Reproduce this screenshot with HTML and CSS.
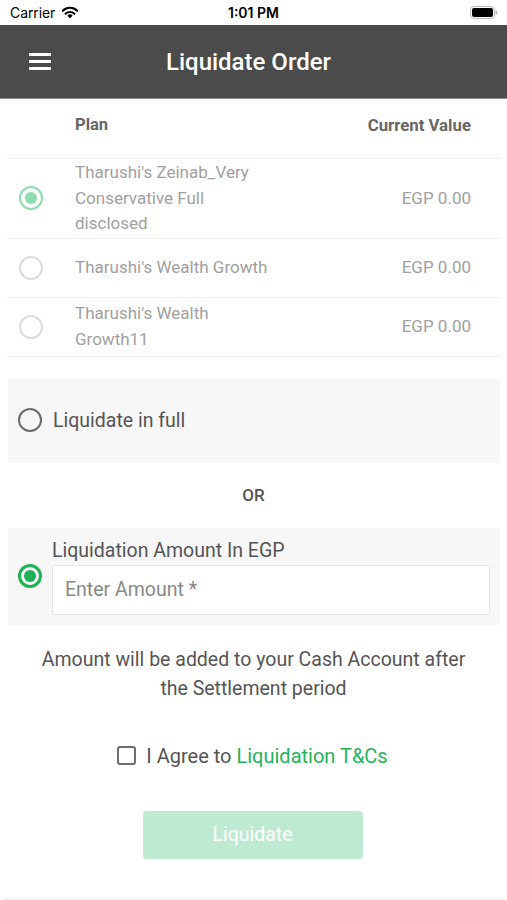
FILE: index.html
```html
<!DOCTYPE html>
<html>
<head>
<meta charset="utf-8">
<link rel="stylesheet" href="styles.css">
</head>
<body>
<div class="screen">
  <div class="status">
    <div class="status-left">
      <span class="carrier">Carrier</span>
      <svg class="wifi" width="18" height="13" viewBox="0 0 18 13">
        <path d="M9 12.5 L6.3 9.6 A4 4 0 0 1 11.7 9.6 Z" fill="#000"/>
        <path d="M4.6 7.8 A6.4 6.4 0 0 1 13.4 7.8" fill="none" stroke="#000" stroke-width="2.1" stroke-linecap="round"/>
        <path d="M1.8 4.8 A10.2 10.2 0 0 1 16.2 4.8" fill="none" stroke="#000" stroke-width="2.1" stroke-linecap="round"/>
      </svg>
    </div>
    <div class="time">1:01 PM</div>
    <div class="status-right">
      <svg width="28" height="13" viewBox="0 0 28 13">
        <rect x="0.5" y="0.5" width="24" height="12" rx="3.5" fill="none" stroke="#bbb" stroke-width="1"/>
        <rect x="2" y="2" width="21" height="9" rx="2" fill="#000"/>
        <rect x="25.5" y="4.5" width="1.8" height="4" rx="0.9" fill="#bbb"/>
      </svg>
    </div>
  </div>

  <div class="nav">
    <div class="burger"><span></span><span></span><span></span></div>
    <div class="title">Liquidate Order</div>
  </div>

  <div class="table">
    <div class="thead">
      <div class="col-radio"></div>
      <div class="col-name">Plan</div>
      <div class="col-val">Current Value</div>
    </div>
    <div class="row">
      <div class="col-radio"><span class="radio radio-light-on"></span></div>
      <div class="col-name">Tharushi's Zeinab_Very Conservative Full disclosed</div>
      <div class="col-val">EGP 0.00</div>
    </div>
    <div class="row">
      <div class="col-radio"><span class="radio radio-light"></span></div>
      <div class="col-name">Tharushi's Wealth Growth</div>
      <div class="col-val">EGP 0.00</div>
    </div>
    <div class="row">
      <div class="col-radio"><span class="radio radio-light"></span></div>
      <div class="col-name">Tharushi's Wealth Growth11</div>
      <div class="col-val">EGP 0.00</div>
    </div>
  </div>

  <div class="option option-full">
    <span class="radio radio-dark"></span>
    <span class="option-label">Liquidate in full</span>
  </div>

  <div class="or">OR</div>

  <div class="option option-amount">
    <span class="radio radio-green"></span>
    <div class="amount-col">
      <div class="amount-label">Liquidation Amount In EGP</div>
      <div class="input">Enter Amount *</div>
    </div>
  </div>

  <p class="note">Amount will be added to your Cash Account after the Settlement period</p>

  <div class="agree">
    <span class="checkbox"></span>
    <span>I Agree to <span class="link">Liquidation T&amp;Cs</span></span>
  </div>

  <div class="btn-wrap">
    <div class="btn">Liquidate</div>
  </div>

  <div class="bottom-line"></div>
</div>
</body>
</html>
```

FILE: styles.css
```css
* { box-sizing: border-box; }
html, body { margin: 0; padding: 0; background: #fff; }
body { font-family: Roboto, "Noto Sans", sans-serif; width: 507px; height: 900px; overflow: hidden; }
.screen { width: 507px; height: 900px; display: flex; flex-direction: column; position: relative; }

.status { height: 25px; display: flex; align-items: center; justify-content: space-between; padding: 0 9px 0 10px; font-family: Inter, "Liberation Sans", sans-serif; font-size: 14px; color: #000; position: relative; }
.status-left { display: flex; align-items: center; gap: 6px; }
.carrier { letter-spacing: -0.1px; }
.time { position: absolute; left: 0; right: 0; text-align: center; font-weight: 600; pointer-events: none; }
.status-right { display: flex; align-items: center; }

.nav { height: 74px; background: #4b4b4b; border-bottom: 1px solid #8c8c8c; display: flex; align-items: center; position: relative; }
.burger { width: 22px; margin-left: 29px; display: flex; flex-direction: column; gap: 4px; }
.burger span { display: block; height: 3px; background: #fff; border-radius: 1px; }
.title { position: absolute; left: 0; right: 10px; text-align: center; color: #fff; font-size: 24px; line-height: 28px; font-weight: 500; top: 23px; pointer-events: none; }

.table { margin: 0 7px; }
.thead { height: 60px; display: flex; align-items: center; border-bottom: 1px solid #ececec; font-size: 16.5px; font-weight: 700; color: #666; padding-bottom: 8px; }
.thead .col-val { padding-right: 29px; font-size: 16.8px; }
.row { display: flex; align-items: center; min-height: 59px; padding: 1px 0; border-bottom: 1px solid #efefef; font-size: 17px; line-height: 25.5px; color: #a0a0a0; }
.col-radio { width: 68px; flex-shrink: 0; display: flex; align-items: center; padding-left: 12px; }
.col-name { width: 200px; flex-shrink: 0; }
.col-val { flex: 1; text-align: right; padding-right: 29px; }

.radio { width: 24px; height: 24px; border-radius: 50%; display: inline-block; flex-shrink: 0; position: relative; }
.radio-light { border: 2px solid #dcdcdc; }
.radio-light-on { border: 2px solid #8fdcb1; }
.radio-light-on::after { content: ""; position: absolute; left: 4px; top: 4px; width: 12px; height: 12px; border-radius: 50%; background: #8fdcb1; }
.radio-dark { border: 2px solid #6b6b6b; }
.radio-green { border: 3px solid #1eb257; }
.radio-green::after { content: ""; position: absolute; left: 3px; top: 3px; width: 12px; height: 12px; border-radius: 50%; background: #1eb257; }

.option { margin: 0 7px 0 8px; background: #f7f7f7; display: flex; align-items: center; }
.option-full { margin-top: 21px; height: 85px; padding-left: 10px; gap: 11px; }
.option-label { font-size: 19.5px; color: #555; }
.or { height: 65px; display: flex; align-items: center; justify-content: center; font-size: 17px; color: #555; font-weight: 500; }
.option-amount { height: 97px; padding: 0 10px; gap: 10px; }
.amount-col { flex: 1; display: flex; flex-direction: column; padding-top: 1px; }
.amount-label { font-size: 19.5px; color: #555; line-height: 24px; margin-bottom: 2px; }
.input { height: 50px; background: #fff; border: 1px solid #e6e6e6; border-radius: 2px; display: flex; align-items: center; padding-left: 12px; font-size: 19.5px; color: #888; }

.note { margin: 20px 28px 0; text-align: center; font-size: 19.5px; line-height: 29px; color: #555; }
.agree { margin-top: 41px; height: 24px; display: flex; align-items: center; justify-content: center; gap: 10px; font-size: 20px; color: #555; padding-right: 2px; }
.checkbox { width: 19px; height: 19px; border: 2px solid #6e6e6e; border-radius: 3px; display: inline-block; }
.link { color: #25b35b; }

.btn-wrap { margin-top: 43px; display: flex; justify-content: center; }
.btn { width: 220px; height: 48px; background: #bfead2; border-radius: 4px; color: #fff; font-size: 19.5px; display: flex; align-items: center; justify-content: center; margin-right: 2px; }

.bottom-line { position: absolute; left: 3px; right: 3px; bottom: 0; height: 2px; background: #f3f3f3; }
```
